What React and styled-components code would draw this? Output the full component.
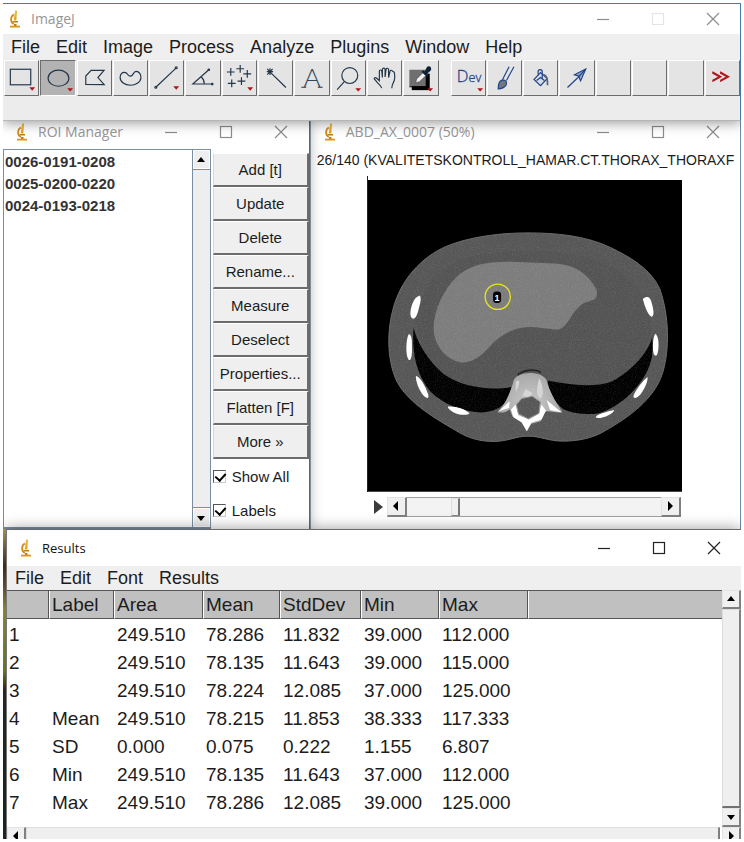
import React, { useState } from 'react'
import styled, { createGlobalStyle } from 'styled-components'

const tools = ['rect', 'oval', 'polygon', 'freehand', 'line', 'angle', 'points', 'wand', 'text', 'zoom', 'hand', 'picker']
const extraTools = ['dev', 'brush', 'fill', 'arrow', 'blank1', 'blank2', 'blank3', 'more']
const withMenu = {
  rect: [28, 27],
  oval: [30, 28],
  line: [27, 26],
  points: [28, 27],
  zoom: [27, 28],
  picker: [27, 28],
  dev: [29, 28],
}
const menus = ['File', 'Edit', 'Image', 'Process', 'Analyze', 'Plugins', 'Window', 'Help']
const resultMenus = ['File', 'Edit', 'Font', 'Results']
const rois = ['0026-0191-0208', '0025-0200-0220', '0024-0193-0218']
const roiActions = ['Add [t]', 'Update', 'Delete', 'Rename...', 'Measure', 'Deselect', 'Properties...', 'Flatten [F]', 'More »']
const columns = ['', 'Label', 'Area', 'Mean', 'StdDev', 'Min', 'Max', '']
const widths = [42, 65, 89, 77, 81, 78, 89]
const rows = [
  ['1', '', '249.510', '78.286', '11.832', '39.000', '112.000'],
  ['2', '', '249.510', '78.135', '11.643', '39.000', '115.000'],
  ['3', '', '249.510', '78.224', '12.085', '37.000', '125.000'],
  ['4', 'Mean', '249.510', '78.215', '11.853', '38.333', '117.333'],
  ['5', 'SD', '0.000', '0.075', '0.222', '1.155', '6.807'],
  ['6', 'Min', '249.510', '78.135', '11.643', '37.000', '112.000'],
  ['7', 'Max', '249.510', '78.286', '12.085', '39.000', '125.000'],
]

const glyphs = {
  rect: <rect x="5.5" y="8.5" width="21" height="16" />,
  oval: <ellipse cx="18" cy="17.7" rx="10.7" ry="8.3" />,
  polygon: <path d="M8 24V15.5L13.5 9.6H26.8L20.5 17L27 24.3Z" />,
  freehand: <path d="M6.3 17C6.3 13 9 11 12 12C14.5 13 14 15.6 17 15.6C20 15.6 19.5 10.7 22.8 10.7C26 10.7 28 14 27.7 17.5C27.3 22 22 25 17 25C11 25 6.3 21.5 6.3 17Z" />,
  line: <g><path d="M6 27L27 7" /><circle cx="6" cy="27" r="1" /><circle cx="27" cy="7" r="1" /></g>,
  angle: <g><path d="M23.5 9L7 23.7H27.5M15.7 16.5Q18.8 19 18.8 23.5" /><circle cx="23.5" cy="9" r=".8" /><circle cx="27" cy="23.7" r=".8" /></g>,
  points: <path d="M4 11.3H12M8 7.3V15.3M13.7 8H21.7M17.7 4V12M21 13.3H29M25 9.3V17.3M5 23H13M9 19V27M15 20.7H23M19 16.7V24.7" />,
  wand: <path d="M12 12L27.7 27.3M8 11H14.5M11.3 7.5V14.5M8.5 8L14 14M14 8L8.5 14" />,
  text: <path d="M6.5 27H11.5M23.5 27H28.5" />,
  zoom: <g><circle cx="18.3" cy="15" r="8.2" /><path d="M12.7 21.2L5.3 29.5" /></g>,
  hand: <path d="M14 28C13.5 25.5 11 24 9.5 22L6.5 18.5C6 17 8 16.8 9 17.8L11.7 20.3V10.5C11.7 8.8 14 8.8 14.2 10.5L14.8 17V8.5C15 7 17.5 7 17.6 8.5V16.5L18.6 8.5C19 7 21 7.2 21.2 8.5L21.2 17L22.7 10.5C23 9 25 9.3 25.2 10.5L27 11.5C28 16 27.5 20 26 22.5C24.8 25 24.5 26.5 24.5 28" />,
  picker: (
    <g stroke="none">
      <path d="M8 13H26.5V30H8Z" fill="#000" />
      <path d="M5.5 9H22.5V26H5.5Z" fill="#6f6f6f" />
      <path d="M5.5 26H22.5V27H5.5ZM22.5 9H23.5V27H22.5Z" fill="#000" />
      <path d="M12 22.5L13 18.5L19.5 12L22.5 15L16 21.3Z" fill="#eee" stroke="#445" strokeWidth=".6" />
      <path d="M18 11L20 9.5L21.3 10.8L23.5 6.5C25 4 29 6 27.8 9.3C27 11 25 12 24 12.7L25.5 14.5L23.8 16.5Z" fill="#0d2138" />
    </g>
  ),
  brush: (
    <g stroke="#1f4287">
      <path d="M21.7 6L15 19M26.7 6L19 20" />
      <path d="M10.5 28.7C10.5 24 12 20 15 19.5C18.5 19.5 20 22 18.5 25C16.5 27.5 13 28.5 10.5 28.7Z" fill="#737880" />
    </g>
  ),
  fill: (
    <g stroke="#1f4287">
      <path d="M10.3 19L17 12L24 18L17 25.3Z" fill="#d6dce8" />
      <path d="M14.5 14V11.5C14.5 8 18.8 8 18.8 11.5V18M13 20L17 17L21 20" />
      <path d="M20 14C23.5 15 24.3 18 24.2 25" stroke="#596477" strokeWidth="1.8" />
    </g>
  ),
  arrow: (
    <g stroke="#1f4287">
      <path d="M7.7 27.3L18 17.5" />
      <path d="M26.5 8.3L14.8 14.2L19 15.5L21.2 20.5Z" fill="#93a8c9" />
      <path d="M26.5 8.3L18 17.5" />
    </g>
  ),
  more: <path d="M6.5 11.2L15.5 16.2L6.5 21M14.5 11.2L23.5 16.2L14.5 21M6.5 12.4L13.5 16.2L6.5 20M14.5 12.4L21.5 16.2L14.5 20" stroke="#b0151c" />,
}

const ToolIcon = ({ name }) => (
  <svg width="34" height="34" viewBox="0 0 35 35" fill="none" stroke="#233549" strokeWidth="1.2" aria-hidden="true">
    {glyphs[name]}
    {name === 'text' && <ToolLetter x="17.5" y="27" textAnchor="middle">A</ToolLetter>}
    {name === 'dev' && <DevLabel x="5" y="22">D<tspan fontSize="13">ev</tspan></DevLabel>}
    {withMenu[name] && (
      <path stroke="none" fill="#b01218" d={`M${withMenu[name][0] - 3} ${withMenu[name][1]}h6l-3 3.5z`} />
    )}
  </svg>
)

const Microscope = () => (
  <svg width="12" height="18" viewBox="0 0 12 18" aria-hidden="true">
    <path d="M6.2 .5L7.8 .8L7.3 10.5L4.8 10.2Z" fill="#e0a000" />
    <path d="M4.8 4.5C1.3 6.5 1 12 4.8 14" fill="none" stroke="#d18a10" strokeWidth="1.7" />
    <path d="M3.5 11H9V12.5H3.5ZM5 14H7.5V16H5Z" fill="#c77a12" />
    <path d="M1 15.7H11V17.5H1Z" fill="#dc9413" />
    <path d="M6 1L6.7 1L6.2 9H5.6Z" fill="#f7cf60" />
  </svg>
)

const TitleBar = ({ title, indent, active, size = 28, noMax }) => (
  <TitleRow $indent={indent} $size={size}>
    <Microscope />
    <Title $active={active}>{title}</Title>
    <WinButton aria-label="Minimize" $active={active}>
      <svg width="14" height="14" viewBox="0 0 14 14"><path d="M1 7.5H13" /></svg>
    </WinButton>
    <WinButton aria-label="Maximize" $active={active} $faint={noMax}>
      <svg width="14" height="14" viewBox="0 0 14 14"><rect x="1.5" y="1.5" width="11" height="11" /></svg>
    </WinButton>
    <WinButton aria-label="Close" $active={active}>
      <svg width="14" height="14" viewBox="0 0 14 14"><path d="M1 1L13 13M13 1L1 13" /></svg>
    </WinButton>
  </TitleRow>
)

const arrows = { up: 'M1 7L5 2L9 7Z', down: 'M1 3L5 8L9 3Z', left: 'M7 0L2 5L7 10Z', right: 'M3 0L8 5L3 10Z' }
const Arrow = ({ dir }) => (
  <svg width="10" height="10" viewBox="0 0 10 10"><path d={arrows[dir]} fill="#000" /></svg>
)

const Scan = () => (
  <ScanSvg viewBox="6 15 944 937" role="img" aria-label="Axial CT slice">
    <defs>
      <filter id="grain" x="0" y="0" width="100%" height="100%">
        <feTurbulence type="fractalNoise" baseFrequency="0.35" numOctaves="2" seed="4" />
        <feColorMatrix values="0 0 0 0 1  0 0 0 0 1  0 0 0 0 1  .9 0 0 0 -.38" />
        <feComposite in2="SourceGraphic" operator="in" />
      </filter>
      <filter id="soft"><feGaussianBlur stdDeviation="2" /></filter>
      <radialGradient id="bone">
        <stop offset="0" stopColor="#c8c8c8" />
        <stop offset="1" stopColor="#a6a6a6" />
      </radialGradient>
    </defs>
    <rect x="6" y="15" width="944" height="937" fill="#000" />
    <g filter="url(#soft)">
      <path id="body" fill="#575757" stroke="#686868" strokeWidth="3" d="M487 174C400 174 310 186 240 215C165 248 105 315 82 400C62 470 64 550 88 610C115 675 195 725 270 768C305 790 340 801 385 801C430 800 450 785 487 785C525 785 545 799 590 800C640 800 685 790 720 768C790 728 865 675 891 597C913 525 912 425 883 342C855 280 790 245 735 218C660 182 570 174 487 174Z" />
      <path fill="#535353" d="M150 430C165 350 200 270 340 240C470 215 640 225 730 270C815 310 850 390 858 450C855 520 800 620 690 633C600 640 560 615 487 590C430 620 400 645 340 644C240 635 155 540 150 430Z" />
      <path fill="#000" d="M143 458C155 510 195 570 245 606C290 635 370 650 437 637L430 668C415 690 400 710 345 714C285 710 235 690 195 652C160 610 136 550 143 458Z" />
      <path fill="#000" d="M860 488C850 530 800 590 740 620C680 642 610 630 546 618C548 650 565 685 595 705C625 718 665 722 700 716C760 700 815 645 840 600C862 560 864 530 860 488Z" />
      <path fill="#7b7b7b" d="M203 460C205 400 235 345 270 309C310 270 360 260 440 261L570 266C640 272 672 305 693 345C697 365 692 374 674 379C645 385 630 405 613 432C598 452 590 465 572 465C540 462 515 457 490 457C450 457 415 475 385 502C355 535 330 562 290 564C240 558 203 510 203 460Z" />
      <path fill="url(#bone)" d="M444 618C450 590 530 585 543 618C552 650 565 675 590 712C575 718 550 705 535 712L525 740L497 748L484 770L470 742L440 725L432 704C420 716 405 715 395 712C420 690 435 650 444 618Z" />
      <path fill="#fff" d="M450 690L436 705L443 728L468 744L483 770L497 745L528 735L541 708L527 690L520 718L490 735L458 722ZM398 710L432 680L430 700ZM543 676L588 714L553 706Z" />
      <path fill="#d5d5d5" d="M450 622C462 610 466 625 450 652ZM520 610C538 640 532 675 523 671C508 660 515 640 520 610ZM480 644L500 655L490 670L470 663Z" />
      <path fill="#565656" stroke="#969696" strokeWidth="3" d="M468 672L500 665L524 682L520 716L488 733L458 718L452 690Z" />
      <path stroke="#222" strokeWidth="5" fill="none" d="M456 602C465 587 510 580 525 594" />
      <g fill="#fff">
        <path d="M160 362C167 365 165 380 159 400C154 424 146 438 137 429C129 420 136 386 149 370Z" />
        <path d="M128 479C136 478 139 492 138 517C139 545 135 561 128 555C119 545 119 498 128 479Z" />
        <path d="M150 604C161 606 177 629 187 660C190 674 183 673 172 662C160 646 149 622 150 604Z" />
        <path d="M246 696C268 693 300 704 311 716C306 724 277 722 261 712C252 707 246 702 246 696Z" />
        <path d="M832 373C844 361 856 365 860 389C865 408 867 424 858 426C850 424 839 400 832 373Z" />
        <path d="M870 477C878 483 882 506 878 528C875 548 868 546 864 535C861 515 862 488 870 477Z" />
        <path d="M846 607C849 616 838 641 826 658C812 674 801 673 805 661C813 643 834 616 846 607Z" />
        <path d="M746 706C745 717 711 733 692 730C686 724 706 715 746 706Z" />
      </g>
    </g>
    <use href="#body" filter="url(#grain)" opacity=".25" />
    <circle cx="396" cy="366" r="38" fill="none" stroke="#e6e619" strokeWidth="4" />
    <rect x="382" y="350" width="24" height="35" rx="10" fill="#000" />
    <ScanLabel x="394" y="378" textAnchor="middle">1</ScanLabel>
  </ScanSvg>
)

const App = () => {
  const [tool, setTool] = useState('oval')
  const [slice, setSlice] = useState(26)
  const [showAll, setShowAll] = useState(true)
  const [labels, setLabels] = useState(true)

  const renderTool = (name) => (
    <ToolButton key={name} aria-label={name} $on={tool === name} onClick={() => setTool(name)}>
      <ToolIcon name={name} />
    </ToolButton>
  )

  return (
    <Desktop>
      <GlobalStyle />
      <MainWindow>
        <TitleBar title="ImageJ" indent={6} size={30} noMax />
        <MenuBar $height={25}>
          {menus.map((m) => <MenuItem key={m}>{m}</MenuItem>)}
        </MenuBar>
        <Toolbar>
          {tools.map(renderTool)}
          <span />
          {extraTools.map(renderTool)}
        </Toolbar>
        <StatusBar />
      </MainWindow>

      <Middle>
        <RoiWindow>
          <TitleBar title="ROI Manager" indent={13} />
          <RoiBody>
            <RoiList>
              {rois.map((r) => <li key={r}>{r}</li>)}
            </RoiList>
            <RoiScroll>
              <MetalButton aria-label="Scroll up"><Arrow dir="up" /></MetalButton>
              <MetalThumb />
              <MetalButton aria-label="Scroll down"><Arrow dir="down" /></MetalButton>
            </RoiScroll>
            <RoiActions>
              {roiActions.map((a) => <RoiButton key={a}>{a}</RoiButton>)}
              <Check>
                <input type="checkbox" checked={showAll} onChange={(e) => setShowAll(e.target.checked)} />
                Show All
              </Check>
              <Check>
                <input type="checkbox" checked={labels} onChange={(e) => setLabels(e.target.checked)} />
                Labels
              </Check>
            </RoiActions>
          </RoiBody>
        </RoiWindow>

        <ImageWindow>
          <TitleBar title="ABD_AX_0007 (50%)" indent={13} />
          <Subtitle>26/140 (KVALITETSKONTROLL_HAMAR.CT.THORAX_THORAXF</Subtitle>
          <Viewer>
            <Scan />
            <SliceBar>
              <PlayButton aria-label="Play">
                <svg width="9" height="14" viewBox="0 0 9 14"><path d="M0 0L9 7L0 14Z" fill="#3c3c3c" /></svg>
              </PlayButton>
              <ScrollButton aria-label="Previous slice" $size={20} onClick={() => setSlice(slice - 1)}><Arrow dir="left" /></ScrollButton>
              <SliceRange type="range" min="1" max="140" value={slice} aria-label="Slice" onChange={(e) => setSlice(Number(e.target.value))} />
              <ScrollButton aria-label="Next slice" $size={20} onClick={() => setSlice(slice + 1)}><Arrow dir="right" /></ScrollButton>
            </SliceBar>
          </Viewer>
        </ImageWindow>
      </Middle>

      <Bottom>
        <ResultsWindow>
          <TitleBar title="Results" indent={13} size={36} active />
          <MenuBar $height={24}>
            {resultMenus.map((m) => <MenuItem key={m}>{m}</MenuItem>)}
          </MenuBar>
          <ResultsBody>
            <TableArea>
              <Table>
                <colgroup>
                  {widths.map((w, i) => <col key={i} width={w} />)}
                  <col />
                </colgroup>
                <thead>
                  <tr>{columns.map((c, i) => <th key={i}>{c}</th>)}</tr>
                </thead>
                <tbody>
                  {rows.map((r) => (
                    <tr key={r[0]}>
                      {r.map((c, i) => <td key={i}>{c}</td>)}
                      <td />
                    </tr>
                  ))}
                </tbody>
              </Table>
            </TableArea>
            <VScroll>
              <ScrollButton aria-label="Scroll up" $size={19}><Arrow dir="up" /></ScrollButton>
              <Thumb />
              <ScrollButton aria-label="Scroll down" $size={19}><Arrow dir="down" /></ScrollButton>
            </VScroll>
          </ResultsBody>
          <HScroll>
            <ScrollButton aria-label="Scroll left" $size={19}><Arrow dir="left" /></ScrollButton>
            <Thumb />
            <ScrollButton aria-label="Scroll right" $size={19}><Arrow dir="right" /></ScrollButton>
          </HScroll>
        </ResultsWindow>
      </Bottom>
    </Desktop>
  )
}

export default App


const GlobalStyle = createGlobalStyle`
* {
  box-sizing: border-box;
}
body {
  margin: 0;
  background: #fff;
  color: #1c1c1c;
  font-family: "Liberation Sans", Arial, sans-serif;
}
button {
  padding: 0;
  border: 0;
  color: inherit;
  font-family: inherit;
}
svg {
  flex: none;
  display: block;
}
`

const Desktop = styled.main`
  margin: 3px;
  overflow: hidden;
`

const Window = styled.section`
  position: relative;
  background: #fff;
  min-width: 0;
`

const MainWindow = styled(Window)`
  z-index: 3;
  border-top: 1px solid #4a76a8;
  border-right: 1px solid #4a76a8;
  border-bottom: 1px solid #b5b5b5;
  box-shadow: 0 2px 12px rgba(0, 0, 0, 0.4);
`

const TitleRow = styled.header`
  display: flex;
  align-items: center;
  height: ${(p) => p.$size}px;
  padding-left: ${(p) => p.$indent}px;
  ${(p) => p.$size === 28 && 'padding-bottom: 6px;'}
`

const Title = styled.h1`
  flex: 1;
  margin: 0 0 0 10px;
  font: 400 14px/20px "Open Sans", "Noto Sans", sans-serif;
  color: ${(p) => (p.$active ? '#111' : '#969696')};
  font-size: ${(p) => (p.$active ? 13 : 14)}px;
  white-space: nowrap;
`

const WinButton = styled.button`
  display: flex;
  align-items: center;
  justify-content: center;
  width: 55px;
  height: 22px;
  background: none;
  svg {
    fill: none;
    stroke: ${(p) => (p.$faint ? '#e4e4e4' : p.$active ? '#222' : '#8c8c8c')};
    stroke-width: 1.2;
  }
`

const MenuBar = styled.nav`
  display: flex;
  align-items: center;
  height: ${(p) => p.$height}px;
  background: #efefef;
`

const MenuItem = styled.button`
  padding: 0 8px;
  background: none;
  font-size: 18px;
  line-height: 24px;
`

const Toolbar = styled.div`
  display: grid;
  grid-template-columns: repeat(12, 1fr) 10px repeat(8, 1fr);
  column-gap: 1px;
  padding: 1px 0 0 1px;
  background: #ececec;
`

const ToolButton = styled.button`
  height: 36px;
  min-width: 0;
  overflow: hidden;
  background: ${(p) => (p.$on ? '#b3b3b3' : '#e4e4e4')};
  border: solid;
  border-width: 1px;
  border-color: ${(p) => (p.$on ? '#6c6c6c #fff #fff #6c6c6c' : '#fff #6c6c6c #6c6c6c #fff')};
`

const ToolLetter = styled.text`
  font: 300 27px Lato, "Open Sans", sans-serif;
  fill: #33465a;
  stroke: none;
`

const DevLabel = styled.text`
  font: 300 17px "Open Sans", Lato, sans-serif;
  fill: #1f4287;
  stroke: #1f4287;
  stroke-width: 0.3;
`

const StatusBar = styled.div`
  height: 24px;
  background: #ececec;
`

const Middle = styled.div`
  display: flex;
  height: 408px;
`

const RoiWindow = styled(Window)`
  z-index: 2;
  display: flex;
  flex-direction: column;
  flex: 307 1 0;
  border-right: 1px solid #4f6c84;
  box-shadow: 0 0 12px rgba(0, 0, 0, 0.3);
`

const RoiBody = styled.div`
  flex: 1;
  display: flex;
  min-height: 0;
`

const RoiList = styled.ul`
  flex: 1;
  margin: 0;
  padding: 1px;
  list-style: none;
  border: solid #7a8ea3;
  border-width: 1px 0 2px 1px;
  font-size: 15px;
  font-weight: 700;
  line-height: 22px;
  color: #333;
`

const RoiScroll = styled.div`
  display: flex;
  flex-direction: column;
  width: 19px;
  margin-right: 2px;
  border: 1px solid #7a8ea3;
  border-bottom-width: 2px;
`

const MetalButton = styled.button`
  display: flex;
  align-items: center;
  justify-content: center;
  height: 19px;
  background: #eee;
  border: 1px solid #fff;
`

const MetalThumb = styled.div`
  flex: 1;
  background: #eee;
  border-top: 1px solid #6f93b5;
  border-bottom: 1px solid #6f93b5;
`

const RoiActions = styled.div`
  display: flex;
  flex-direction: column;
  width: 96px;
  padding-top: 4px;
`

const RoiButton = styled.button`
  height: 34px;
  background: #efefef;
  border: solid;
  border-width: 1px 2px 2px 1px;
  border-color: #fff #6c6c6c #6c6c6c #d8d8d8;
  font-size: 15px;
`

const Check = styled.label`
  display: flex;
  align-items: center;
  gap: 6px;
  height: 34px;
  font-size: 15px;
  input {
    appearance: none;
    width: 13px;
    height: 13px;
    margin: 0;
    border: 1px solid;
    border-color: #555 #ccc #ccc #555;
  }
  input:checked::before {
    content: "";
    display: block;
    width: 5px;
    height: 8px;
    margin: 0 3px;
    border: solid #000;
    border-width: 0 2px 2px 0;
    transform: rotate(42deg);
  }
`

const ImageWindow = styled(Window)`
  flex: 431 1 0;
  border-left: 1px solid #9aa6b2;
  border-right: 1px solid #6c8fae;
`

const Subtitle = styled.p`
  margin: 0;
  padding-left: 6px;
  white-space: nowrap;
  font-size: 14px;
  line-height: 22px;
`

const Viewer = styled.div`
  width: 73.4%;
  margin: 5px auto 0 13%;
`

const ScanSvg = styled.svg`
  width: 100%;
  padding-top: 4px;
  border-left: 1px solid #222;
`

const ScanLabel = styled.text`
  font: 700 27px "Liberation Sans", Arial, sans-serif;
  fill: #fff;
`

const SliceBar = styled.div`
  display: flex;
  align-items: center;
  margin-top: 5px;
  padding: 0 1px 0 7px;
`

const PlayButton = styled.button`
  width: 13px;
  background: none;
`

const ScrollButton = styled.button`
  flex: none;
  display: flex;
  align-items: center;
  justify-content: center;
  width: ${(p) => p.$size}px;
  height: ${(p) => p.$size}px;
  background: #f0f0f0;
  border: solid;
  border-width: 1px 2px 2px 1px;
  border-color: #e4e4e4 #808080 #808080 #e4e4e4;
`

const SliceRange = styled.input`
  appearance: none;
  flex: 1;
  min-width: 0;
  height: 20px;
  margin: 0;
  background: #f3f3f3;
  border: solid #a0a0a0;
  border-width: 1px 0;
  &::-webkit-slider-thumb {
    appearance: none;
    width: 9px;
    height: 18px;
    background: #f0f0f0;
    border: solid;
    border-width: 1px 2px 1px 1px;
    border-color: #ddd #777 #888 #ddd;
  }
`

const Bottom = styled.div`
  padding-left: 3px;
  background: linear-gradient(#c4ab63, #4a3424 12%, #6e5640 18%, #a3a040 26%, #7d8a28 46%, #3a2c20 52%, #23302c 60%, #1d2a30 100%);
`

const ResultsWindow = styled(Window)`
  z-index: 3;
  border-top: 1px solid #6a6a6a;
  border-left: 1px solid #777;
  box-shadow: 0 0 14px rgba(0, 0, 0, 0.4);
`

const ResultsBody = styled.div`
  display: flex;
`

const TableArea = styled.div`
  flex: 1;
  min-width: 0;
  border-top: 1px solid #555;
`

const Table = styled.table`
  width: 100%;
  table-layout: fixed;
  border-spacing: 0;
  font-size: 19px;
  line-height: 28px;
  text-align: left;
  th {
    height: 28px;
    padding: 0 0 0 2px;
    background: #c0c0c0;
    border-right: 1px solid #555;
    border-bottom: 1px solid #555;
    border-left: 1px solid #fff;
    font-weight: 400;
    line-height: 26px;
  }
  th:first-child {
    border-left: 0;
  }
  th:last-child {
    border-right: 0;
  }
  td {
    height: 28px;
    padding: 0 0 0 3px;
  }
  td:first-child {
    padding-left: 2px;
  }
  tbody::before {
    content: "";
    display: block;
    height: 2px;
  }
  tbody::after {
    content: "";
    display: block;
    height: 10px;
  }
`

const VScroll = styled.div`
  display: flex;
  flex-direction: column;
  width: 19px;
`

const Thumb = styled.div`
  flex: 1;
  background: #efefef;
  border: solid;
  border-width: 1px 2px 2px 1px;
  border-color: #ddd #808080 #707070 #ddd;
`

const HScroll = styled.div`
  display: flex;
  height: 12px;
  overflow: hidden;
  button + div {
    height: 19px;
  }
  div {
    margin-right: 2px;
  }
`
